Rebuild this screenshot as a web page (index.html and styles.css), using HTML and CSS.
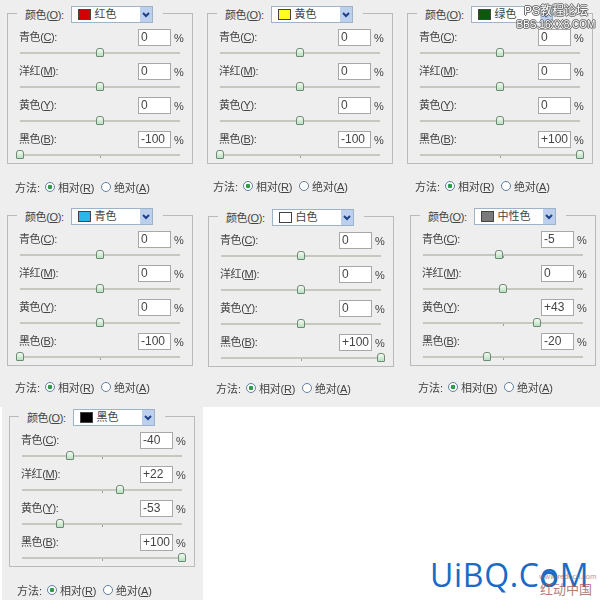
FILE: index.html
```html
<!DOCTYPE html>
<html lang="zh">
<head>
<meta charset="utf-8">
<title>可选颜色</title>
<link rel="stylesheet" href="styles.css">
</head>
<body>
<main class="canvas">
  <div class="sheet s1"></div>
  <div class="sheet s2"></div>
  <div class="sheet s3"></div>

  <section class="panel p1">
    <div class="group">
      <div class="legend"><span class="lab">颜色(<u>O</u>):</span><div class="select"><i class="swatch red"></i><span class="name">红色</span><b class="arrow"><svg viewBox="0 0 12 16" width="12" height="16"><path d="M3 6l3 3 3-3" fill="none" stroke="#1f3f86" stroke-width="2"/></svg></b></div></div>
      <div class="row"><span class="lab">青色(<u>C</u>):</span><span class="input">0</span><span class="pct">%</span></div>
      <div class="slider"><i class="thumb" style="left:50%"></i></div>
      <div class="row"><span class="lab">洋红(<u>M</u>):</span><span class="input">0</span><span class="pct">%</span></div>
      <div class="slider"><i class="thumb" style="left:50%"></i></div>
      <div class="row"><span class="lab">黄色(<u>Y</u>):</span><span class="input">0</span><span class="pct">%</span></div>
      <div class="slider"><i class="thumb" style="left:50%"></i></div>
      <div class="row"><span class="lab">黑色(<u>B</u>):</span><span class="input">-100</span><span class="pct">%</span></div>
      <div class="slider"><i class="thumb" style="left:0%"></i></div>
    </div>
    <div class="method"><span class="mlab">方法:</span><i class="radio on"></i><span class="opt">相对(<u>R</u>)</span><i class="radio"></i><span class="opt">绝对(<u>A</u>)</span></div>
  </section>

  <section class="panel p2">
    <div class="group">
      <div class="legend"><span class="lab">颜色(<u>O</u>):</span><div class="select"><i class="swatch yellow"></i><span class="name">黄色</span><b class="arrow"><svg viewBox="0 0 12 16" width="12" height="16"><path d="M3 6l3 3 3-3" fill="none" stroke="#1f3f86" stroke-width="2"/></svg></b></div></div>
      <div class="row"><span class="lab">青色(<u>C</u>):</span><span class="input">0</span><span class="pct">%</span></div>
      <div class="slider"><i class="thumb" style="left:50%"></i></div>
      <div class="row"><span class="lab">洋红(<u>M</u>):</span><span class="input">0</span><span class="pct">%</span></div>
      <div class="slider"><i class="thumb" style="left:50%"></i></div>
      <div class="row"><span class="lab">黄色(<u>Y</u>):</span><span class="input">0</span><span class="pct">%</span></div>
      <div class="slider"><i class="thumb" style="left:50%"></i></div>
      <div class="row"><span class="lab">黑色(<u>B</u>):</span><span class="input">-100</span><span class="pct">%</span></div>
      <div class="slider"><i class="thumb" style="left:0%"></i></div>
    </div>
    <div class="method"><span class="mlab">方法:</span><i class="radio on"></i><span class="opt">相对(<u>R</u>)</span><i class="radio"></i><span class="opt">绝对(<u>A</u>)</span></div>
  </section>

  <section class="panel p3">
    <div class="group">
      <div class="legend"><span class="lab">颜色(<u>O</u>):</span><div class="select"><i class="swatch green"></i><span class="name">绿色</span><b class="arrow"><svg viewBox="0 0 12 16" width="12" height="16"><path d="M3 6l3 3 3-3" fill="none" stroke="#1f3f86" stroke-width="2"/></svg></b></div></div>
      <div class="row"><span class="lab">青色(<u>C</u>):</span><span class="input">0</span><span class="pct">%</span></div>
      <div class="slider"><i class="thumb" style="left:50%"></i></div>
      <div class="row"><span class="lab">洋红(<u>M</u>):</span><span class="input">0</span><span class="pct">%</span></div>
      <div class="slider"><i class="thumb" style="left:50%"></i></div>
      <div class="row"><span class="lab">黄色(<u>Y</u>):</span><span class="input">0</span><span class="pct">%</span></div>
      <div class="slider"><i class="thumb" style="left:50%"></i></div>
      <div class="row"><span class="lab">黑色(<u>B</u>):</span><span class="input">+100</span><span class="pct">%</span></div>
      <div class="slider"><i class="thumb" style="left:100%"></i></div>
    </div>
    <div class="method"><span class="mlab">方法:</span><i class="radio on"></i><span class="opt">相对(<u>R</u>)</span><i class="radio"></i><span class="opt">绝对(<u>A</u>)</span></div>
  </section>

  <section class="panel p4">
    <div class="group">
      <div class="legend"><span class="lab">颜色(<u>O</u>):</span><div class="select"><i class="swatch cyan"></i><span class="name">青色</span><b class="arrow"><svg viewBox="0 0 12 16" width="12" height="16"><path d="M3 6l3 3 3-3" fill="none" stroke="#1f3f86" stroke-width="2"/></svg></b></div></div>
      <div class="row"><span class="lab">青色(<u>C</u>):</span><span class="input">0</span><span class="pct">%</span></div>
      <div class="slider"><i class="thumb" style="left:50%"></i></div>
      <div class="row"><span class="lab">洋红(<u>M</u>):</span><span class="input">0</span><span class="pct">%</span></div>
      <div class="slider"><i class="thumb" style="left:50%"></i></div>
      <div class="row"><span class="lab">黄色(<u>Y</u>):</span><span class="input">0</span><span class="pct">%</span></div>
      <div class="slider"><i class="thumb" style="left:50%"></i></div>
      <div class="row"><span class="lab">黑色(<u>B</u>):</span><span class="input">-100</span><span class="pct">%</span></div>
      <div class="slider"><i class="thumb" style="left:0%"></i></div>
    </div>
    <div class="method"><span class="mlab">方法:</span><i class="radio on"></i><span class="opt">相对(<u>R</u>)</span><i class="radio"></i><span class="opt">绝对(<u>A</u>)</span></div>
  </section>

  <section class="panel p5">
    <div class="group">
      <div class="legend"><span class="lab">颜色(<u>O</u>):</span><div class="select"><i class="swatch white"></i><span class="name">白色</span><b class="arrow"><svg viewBox="0 0 12 16" width="12" height="16"><path d="M3 6l3 3 3-3" fill="none" stroke="#1f3f86" stroke-width="2"/></svg></b></div></div>
      <div class="row"><span class="lab">青色(<u>C</u>):</span><span class="input">0</span><span class="pct">%</span></div>
      <div class="slider"><i class="thumb" style="left:50%"></i></div>
      <div class="row"><span class="lab">洋红(<u>M</u>):</span><span class="input">0</span><span class="pct">%</span></div>
      <div class="slider"><i class="thumb" style="left:50%"></i></div>
      <div class="row"><span class="lab">黄色(<u>Y</u>):</span><span class="input">0</span><span class="pct">%</span></div>
      <div class="slider"><i class="thumb" style="left:50%"></i></div>
      <div class="row"><span class="lab">黑色(<u>B</u>):</span><span class="input">+100</span><span class="pct">%</span></div>
      <div class="slider"><i class="thumb" style="left:100%"></i></div>
    </div>
    <div class="method"><span class="mlab">方法:</span><i class="radio on"></i><span class="opt">相对(<u>R</u>)</span><i class="radio"></i><span class="opt">绝对(<u>A</u>)</span></div>
  </section>

  <section class="panel p6">
    <div class="group">
      <div class="legend"><span class="lab">颜色(<u>O</u>):</span><div class="select"><i class="swatch grey"></i><span class="name">中性色</span><b class="arrow"><svg viewBox="0 0 12 16" width="12" height="16"><path d="M3 6l3 3 3-3" fill="none" stroke="#1f3f86" stroke-width="2"/></svg></b></div></div>
      <div class="row"><span class="lab">青色(<u>C</u>):</span><span class="input">-5</span><span class="pct">%</span></div>
      <div class="slider"><i class="thumb" style="left:47.5%"></i></div>
      <div class="row"><span class="lab">洋红(<u>M</u>):</span><span class="input">0</span><span class="pct">%</span></div>
      <div class="slider"><i class="thumb" style="left:50%"></i></div>
      <div class="row"><span class="lab">黄色(<u>Y</u>):</span><span class="input">+43</span><span class="pct">%</span></div>
      <div class="slider"><i class="thumb" style="left:71.5%"></i></div>
      <div class="row"><span class="lab">黑色(<u>B</u>):</span><span class="input">-20</span><span class="pct">%</span></div>
      <div class="slider"><i class="thumb" style="left:40%"></i></div>
    </div>
    <div class="method"><span class="mlab">方法:</span><i class="radio on"></i><span class="opt">相对(<u>R</u>)</span><i class="radio"></i><span class="opt">绝对(<u>A</u>)</span></div>
  </section>

  <section class="panel p7">
    <div class="group">
      <div class="legend"><span class="lab">颜色(<u>O</u>):</span><div class="select"><i class="swatch black"></i><span class="name">黑色</span><b class="arrow"><svg viewBox="0 0 12 16" width="12" height="16"><path d="M3 6l3 3 3-3" fill="none" stroke="#1f3f86" stroke-width="2"/></svg></b></div></div>
      <div class="row"><span class="lab">青色(<u>C</u>):</span><span class="input">-40</span><span class="pct">%</span></div>
      <div class="slider"><i class="thumb" style="left:30%"></i></div>
      <div class="row"><span class="lab">洋红(<u>M</u>):</span><span class="input">+22</span><span class="pct">%</span></div>
      <div class="slider"><i class="thumb" style="left:61%"></i></div>
      <div class="row"><span class="lab">黄色(<u>Y</u>):</span><span class="input">-53</span><span class="pct">%</span></div>
      <div class="slider"><i class="thumb" style="left:23.5%"></i></div>
      <div class="row"><span class="lab">黑色(<u>B</u>):</span><span class="input">+100</span><span class="pct">%</span></div>
      <div class="slider"><i class="thumb" style="left:100%"></i></div>
    </div>
    <div class="method"><span class="mlab">方法:</span><i class="radio on"></i><span class="opt">相对(<u>R</u>)</span><i class="radio"></i><span class="opt">绝对(<u>A</u>)</span></div>
  </section>

  <div class="wm-ps"><div class="wm-a">PS教程论坛</div><div class="wm-b">BBS.16XX8.COM</div></div>
  <div class="brand">UiBQ.CoM</div>
  <svg class="ring" viewBox="0 0 20 20" width="20" height="20"><circle cx="10" cy="10" r="6.5" fill="none" stroke="#1e6ac4" stroke-width="3"/></svg>
  <div class="redocn"><div class="red-a">www.redocn.com</div><div class="red-b">红动中国</div></div>
</main>
</body>
</html>
```
FILE: styles.css
```css
* { box-sizing: border-box; }
html, body { margin: 0; padding: 0; background: #fff; }
.canvas {
  position: relative;
  width: 600px;
  height: 600px;
  overflow: hidden;
  font-family: "Liberation Sans", "Noto Sans CJK SC", sans-serif;
  font-size: 11px;
  color: #444;
}
.sheet { position: absolute; background: #eeeeee; }
.s1 { left: 0; top: 0; width: 600px; height: 205px; }
.s2 { left: 0; top: 205px; width: 600px; height: 202px; }
.s3 { left: 2px; top: 407px; width: 201px; height: 193px; }

.panel { position: absolute; width: 200px; height: 200px; filter: blur(0.4px); }
.p1 { left: 0; top: 0; }
.p2 { left: 200px; top: 0; }
.p3 { left: 400px; top: 0; }
.p4 { left: 0; top: 202px; }
.p5 { left: 201px; top: 203px; }
.p6 { left: 403px; top: 202px; }
.p7 { left: 2px; top: 403px; }

.group {
  position: absolute;
  left: 7px;
  top: 13px;
  width: 186px;
  height: 151px;
  border: 1px solid #b9bcb6;
  padding: 15px 0 0 11px;
}
.legend {
  position: absolute;
  left: 9px;
  top: -8px;
  width: 146px;
  display: flex;
  align-items: center;
  gap: 7px;
  padding: 0 0 0 8px;
  background: #eeeeee;
}
.legend .lab { margin-top: 1px; }
.select {
  display: flex;
  align-items: center;
  width: 82px;
  height: 17px;
  padding: 0 0 0 6px;
  background: #fff;
  border: 1px solid #9fb3c8;
}
.swatch { width: 13px; height: 11px; border: 1px solid #444; flex: none; }
.red { background: #d40000; }
.yellow { background: #ffff1e; }
.green { background: #0b5a0b; }
.cyan { background: #2bb6e8; }
.white { background: #fff; }
.grey { background: #7a7a7a; }
.black { background: #000; }
.name { margin-left: 4px; flex: 1; line-height: 15px; }
.arrow { width: 12px; height: 15px; background: #bcd0ee; flex: none; display: block; }
.arrow svg { display: block; }

.lab { white-space: nowrap; letter-spacing: -0.4px; line-height: 13px; }
.lab u, .opt u { text-underline-offset: 1px; }
.row { display: flex; align-items: center; height: 17px; }
.row .lab { width: 119px; }
.input {
  width: 33px;
  height: 17px;
  line-height: 15px;
  padding-left: 2px;
  font-size: 12px;
  background: #fff;
  border: 1px solid #a5aaa6;
}
.pct { margin-left: 3px; font-size: 11px; }

.slider {
  position: relative;
  width: 160px;
  height: 2px;
  margin: 6px 0 9px 1px;
  background: #c4c8be;
}
.slider::after {
  content: "";
  position: absolute;
  left: 50%;
  top: 2px;
  width: 1px;
  height: 2px;
  background: #9a9d96;
}
.thumb {
  position: absolute;
  z-index: 1;
  top: -4px;
  width: 8px;
  height: 9px;
  margin-left: -4px;
  background: linear-gradient(#f6faf4, #b9e0c0);
  border: 1px solid #6d8a74;
  border-radius: 3px 3px 1px 1px;
}

.method {
  position: absolute;
  left: 15px;
  top: 180px;
  display: flex;
  align-items: center;
  height: 14px;
  white-space: nowrap;
}
.p2 .method { left: 13px; top: 179px; }
.p3 .method { top: 179px; }
.p4 .method, .p5 .method, .p6 .method { top: 178px; }
.mlab { width: 30px; }
.radio {
  width: 10px;
  height: 10px;
  border: 1px solid #5f7f9f;
  border-radius: 50%;
  background: #fff;
  flex: none;
  margin-right: 3px;
}
.radio.on { background: radial-gradient(circle, #2f9a4a 0 2px, #fff 2.6px); }
.opt { width: 43px; letter-spacing: -0.2px; }

.wm-ps {
  position: absolute;
  left: 516px;
  top: 4px;
  width: 80px;
  text-align: center;
  color: #fff;
  text-shadow: 0 0 1px #555, 0 0 1px #555, 1px 0 0 #777, -1px 0 0 #777, 0 1px 0 #777, 0 -1px 0 #777;
}
.wm-a { font-size: 12px; line-height: 15px; }
.wm-b { font-size: 10px; line-height: 12px; }

.brand {
  position: absolute;
  left: 430px;
  top: 554px;
  font-family: "Open Sans", "Noto Sans", sans-serif;
  font-size: 32px;
  line-height: 42px;
  letter-spacing: 0.7px;
  color: #1a6ac6;
  white-space: nowrap;
}
.ring { position: absolute; left: 539px; top: 569px; }
.redocn {
  position: absolute;
  left: 539px;
  top: 572px;
  width: 54px;
  text-align: center;
  font-family: "Noto Sans CJK SC", sans-serif;
  color: #a0605a;
}
.red-a { font-size: 7px; line-height: 9px; opacity: .7; }
.red-b { font-size: 13px; line-height: 15px; opacity: .8; }
```
